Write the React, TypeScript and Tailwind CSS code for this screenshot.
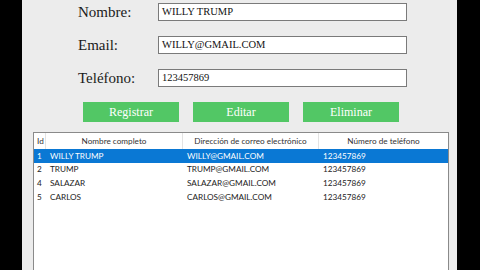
const rows = [
  { id: "1", name: "WILLY TRUMP", email: "WILLY@GMAIL.COM", phone: "123457869", selected: true },
  { id: "2", name: "TRUMP", email: "TRUMP@GMAIL.COM", phone: "123457869" },
  { id: "4", name: "SALAZAR", email: "SALAZAR@GMAIL.COM", phone: "123457869" },
  { id: "5", name: "CARLOS", email: "CARLOS@GMAIL.COM", phone: "123457869" },
]

const serif = { fontFamily: '"Liberation Serif", "DejaVu Serif", serif' }

function Field({ label, value }: { label: string; value: string }) {
  return (
    <div className="flex items-center h-[18px] mb-[15px]">
      <div className="ml-[56px] w-[80px] text-[15px] text-[#1a1a1a] leading-none" style={serif}>
        {label}
      </div>
      <div className="w-[249px] h-[18px] border border-[#7a7a7a] bg-white flex items-center pl-[3px] text-[10.5px] text-[#111]" style={serif}>
        {value}
      </div>
    </div>
  )
}

export default function App() {
  return (
    <div className="w-[480px] h-[270px] bg-black flex overflow-hidden">
      <div className="ml-[22px] w-[435px] h-full bg-[#ececec] pt-[3px]">
        <Field label="Nombre:" value="WILLY TRUMP" />
        <Field label="Email:" value="WILLY@GMAIL.COM" />
        <Field label="Teléfono:" value="123457869" />

        <div className="flex ml-[61px] gap-[14px]">
          {["Registrar", "Editar", "Eliminar"].map((b) => (
            <button
              key={b}
              className="w-[96px] h-[20px] bg-[#52c765] text-white text-[12px] leading-none"
              style={serif}
            >
              {b}
            </button>
          ))}
        </div>

        <div
          className="mt-[10px] ml-[11px] w-[416px] h-[200px] border border-[#8a8a8a] bg-white text-[8.2px] text-[#222]"
          style={{ fontFamily: 'Lato, "Open Sans", sans-serif' }}
        >
          <div className="flex h-[16px] items-center text-[#333]">
            <div className="w-[12px] pl-[3px] border-r border-[#e3e3e3] h-full flex items-center">Id</div>
            <div className="w-[137px] text-center border-r border-[#e3e3e3] h-full flex items-center justify-center">Nombre completo</div>
            <div className="w-[136px] text-center border-r border-[#e3e3e3] h-full flex items-center justify-center">Dirección de correo electrónico</div>
            <div className="flex-1 text-center">Número de teléfono</div>
          </div>
          {rows.map((r) => (
            <div
              key={r.id}
              className={`flex h-[13.7px] items-center ${r.selected ? "bg-[#0a78d4] text-white" : ""}`}
            >
              <div className="w-[16px] pl-[3px]">{r.id}</div>
              <div className="w-[137px]">{r.name}</div>
              <div className="w-[136px]">{r.email}</div>
              <div className="flex-1">{r.phone}</div>
            </div>
          ))}
        </div>
      </div>
    </div>
  )
}
